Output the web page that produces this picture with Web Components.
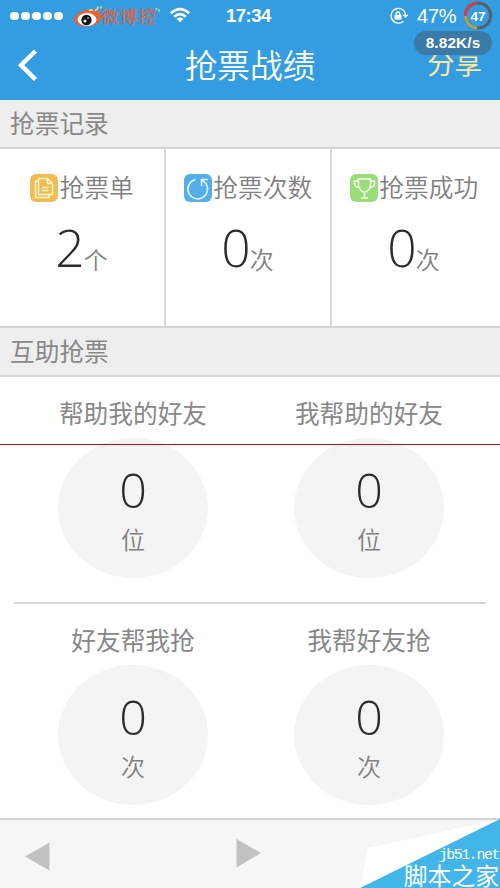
<!DOCTYPE html>
<html lang="zh-CN">
<head>
<meta charset="utf-8">
<title>抢票战绩</title>
<style>
body{margin:0;width:500px;height:888px;overflow:hidden;background:#fff;font-family:"Noto Sans CJK SC",sans-serif;color:#888}
</style>
</head>
<body>
<ticket-app></ticket-app>
<script>
const define=(name,html)=>customElements.define(name,class extends HTMLElement{
  constructor(){super();this.attachShadow({mode:'open'}).innerHTML=html;}
});

define('status-bar',`
<style>
:host{display:grid;grid-template-columns:73px 96px 57px 162px 112px;height:32px;align-items:center;color:#fff;font-family:"Liberation Sans",sans-serif}
.dots{display:flex;gap:2.1px;padding-left:10px}
.dots i{width:8.9px;height:8.9px;border-radius:50%;background:#fff}
svg{display:block}
.time{font:bold 18.500px/32px "Liberation Sans",sans-serif;letter-spacing:-.5px}
.right{display:flex;align-items:center}
.pct{font-size:20px;line-height:32px;width:46px;letter-spacing:-.2px;padding-left:1px}
</style>
<div class="dots"><i></i><i></i><i></i><i></i><i></i></div>
<svg width="96" height="32" viewBox="0 0 96 32">
  <path d="M1 20C2 13 12 8 22 10C28 11 31 17 26 22C20 28 3 29 1 20Z" fill="#e96036"/>
  <ellipse cx="14" cy="19.5" rx="9.5" ry="6.5" fill="#fff"/>
  <circle cx="13.5" cy="20" r="5.2" fill="#101317"/><circle cx="12" cy="21" r="1.5" fill="#fff"/><circle cx="15" cy="18" r=".8" fill="#fff"/>
  <path d="M16 11q2-2 4-.5m2 .5q1-2 3-2" stroke="#e8d98a" stroke-width="1.5" fill="none"/>
  <path d="M24.500 8.500l1-2m2 2l1-2M83 9.500l1-1.500m1.500 3.500l1-2" stroke="#d8e9a0" stroke-width="1.5"/>
  <text x="28" y="22.500" font-family="Noto Sans CJK SC,sans-serif" font-size="17.500" font-weight="500" fill="#d0694f" textLength="55">微博控</text>
</svg>
<svg width="57" height="32" viewBox="0 0 57 32" fill="none" stroke="#fff" stroke-width="2.5">
  <path d="M1.8 13.3Q11 5 20.200 13.300M5.200 16.700Q11 11.600 16.800 16.700"/><path d="M7.500 18.700Q11 16.200 14.500 18.700L11 22.300Z" fill="#fff" stroke="none"/>
</svg>
<span class="time">17:34</span>
<div class="right">
<svg width="28" height="32" viewBox="0 0 28 32" fill="none" stroke="#fff" stroke-width="1.400"><path d="M15.500 21.200A7.400 7.400 0 1 1 15.900 10.700Q17.500 12.500 17.500 15"/><path d="M14.500 14.800H20.500L17.500 18Z" fill="#fff" stroke="none"/><rect x="6.500" y="14.800" width="7" height="4.800" fill="#fff" stroke="none"/><path d="M8.200 15v-1.200a1.800 1.800 0 0 1 3.600 0V15" stroke-width="1.300"/></svg>
<span class="pct">47%</span>
<svg width="32" height="32" viewBox="0 0 32 32" fill="none" stroke-width="3"><circle cx="15" cy="15.500" r="12.600" stroke="#55606a"/><path d="M2.400 16A12.600 12.600 0 0 1 14 3" stroke="#db3d3c"/><path d="M14 28.100A12.600 12.600 0 0 1 2.400 16" stroke="#b5a14a"/><text x="15" y="20.500" text-anchor="middle" fill="#fff" font-family="Liberation Sans,sans-serif" font-weight="bold" font-size="13.500">47</text></svg>
</div>`);

define('nav-bar',`
<style>
:host{display:grid;grid-template-columns:100px 1fr 100px;height:68px;color:#fff;position:relative}
svg{display:block}
.title{font-size:32.700px;line-height:64px;font-weight:350;text-align:center}
.share{font-size:27.500px;line-height:24px;padding:18px 0 0 27px;color:#ffe69a}
.speed{position:absolute;left:414px;top:-1px;width:78px;height:24px;border-radius:12px;background:#3b79a6;font:bold 15.300px/24px "Liberation Sans",sans-serif;text-align:center;letter-spacing:.15px}
</style>
<svg width="100" height="68"><path d="M35.500 19L21 33.200L35.500 47.500" fill="none" stroke="#fff" stroke-width="4.500"/></svg>
<span class="title">抢票战绩</span><span class="share">分享</span><span class="speed">8.82K/s</span>`);

define('section-title',`
<style>:host{display:block;box-sizing:border-box;height:49px;background:#eee;border-bottom:2px solid #d4d4d4;padding-left:10px;font-size:24.700px;line-height:45px}</style><slot></slot>`);

define('stat-cell',`
<style>
:host{display:flex;flex-direction:column;align-items:center;box-sizing:border-box;height:177px;padding-top:20px;border-right:2px solid #d8d8d8}
:host(:last-child){border-right:0}
.head{display:flex;align-items:center;gap:1.500px;height:37px;font-size:24.700px;line-height:34px;font-weight:350;color:#808080}
.label{position:relative;top:-1.500px}
.val{display:flex;align-items:baseline;height:70px;line-height:70px;margin-top:6px}
.num{font-family:"Open Sans",sans-serif;font-weight:360;font-size:51.500px;color:#2c2c2c;letter-spacing:-1px;margin-left:-1px}
.unit{position:relative;top:2px;font-size:24px;font-weight:350;color:#808080}
::slotted(svg){display:block}
</style>
<div class="head"><slot name="icon"></slot><span class="label"><slot name="label"></slot></span></div>
<div class="val"><span class="num"><slot name="num"></slot></span><span class="unit"><slot name="unit"></slot></span></div>`);

define('help-stat',`
<style>
:host{display:flex;flex-direction:column;align-items:center;width:150px;padding-top:17px}
.label{font-size:24.700px;line-height:36px;height:44px;white-space:nowrap}
.disc{width:150px;height:140px;border-radius:50%;background:#f4f4f4;display:flex;flex-direction:column;align-items:center;box-sizing:border-box;padding-top:17px}
.num{font:360 48.500px/68px "Open Sans",sans-serif;color:#2c2c2c}
.unit{font-size:24px;font-weight:350;line-height:31px;color:#808080}
</style>
<span class="label"><slot name="label"></slot></span>
<div class="disc"><span class="num"><slot name="num"></slot></span><span class="unit"><slot></slot></span></div>`);

define('page-footer',`
<style>
:host{display:block;position:relative;box-sizing:border-box;height:70px;background:#f6f6f6;border-top:2px solid #d4d4d4}
svg{display:block}
.mark{position:absolute;right:0;bottom:0;width:140px;height:69px;color:#fff}
.mark p{position:absolute;margin:0;right:1px;white-space:nowrap}
.url{top:29px;font:14.800px/15px "Liberation Mono",monospace;letter-spacing:-1.350px}
.name{bottom:3px;font-size:23.800px;line-height:20px}
</style>
<svg width="500" height="68" fill="#c2c2c2"><path d="M25 36.500L49.500 22.500V50.500ZM236.500 19V47.500L261 33Z"/></svg>
<div class="mark"><svg width="140" height="69"><path d="M8 29L140 0V8L0 69Z" fill="#fff"/><path d="M140 0V69H0Z" fill="#42b6e9"/></svg><p class="url">jb51.net</p><p class="name">脚本之家</p></div>`);

define('ticket-app',`
<style>
:host{display:block;position:relative;width:500px;height:888px}
header{height:100px;background:#349de2}
.cells{display:grid;grid-template-columns:166px 166px 164px;height:177px;border-bottom:2px solid #d4d4d4}
.help{display:flex;justify-content:space-between;padding:0 56px 0 58px;height:225px;box-sizing:border-box}
.second{height:214px}
hr{margin:0 14px;border:0;height:2px;background:#d8d8d8}
.line{position:absolute;left:0;top:444px;width:500px;height:1px;background:#b01c1c;box-shadow:0 0 1px #ffb8b8}
.body{height:441px}
</style>
<header><status-bar></status-bar><nav-bar></nav-bar></header>
<section-title>抢票记录</section-title>
<div class="cells">
<stat-cell><svg slot="icon" width="28" height="28"><rect width="28" height="28" rx="6" fill="#eebd55"/><g fill="none" stroke="#fff4ca" stroke-width="1.500" stroke-linejoin="round"><path d="M8.500 4.500H17.500L22.500 9.500V20.500H8.500ZM17.500 4.500V9.500H22.500M8 7H5.500V23.500H19V21M12 13.500H18.500M12 16.500H18.500"/></g></svg><span slot="label">抢票单</span><span slot="num">2</span><span slot="unit">个</span></stat-cell>
<stat-cell><svg slot="icon" width="28" height="28"><rect width="28" height="28" rx="6" fill="#55aeec"/><g fill="none" stroke="#e5f7ff" stroke-width="1.600"><path d="M11.500 5.500A9.800 9.800 0 1 0 20.500 8L17.500 5.500M17.500 12V5.500H24"/></g></svg><span slot="label">抢票次数</span><span slot="num">0</span><span slot="unit">次</span></stat-cell>
<stat-cell><svg slot="icon" width="28" height="28"><rect width="28" height="28" rx="6" fill="#9bdc7b"/><g fill="none" stroke="#f5ffe9" stroke-width="1.500"><path d="M8.500 5H20.500V11Q20 16.500 14.500 18.500Q9 16.500 8.500 11ZM8.500 7H4.500V10Q5 13 9 13.500M20.500 7H24.500V10Q24 13 20 13.500M14.500 18.500V24M11 24H18"/></g></svg><span slot="label">抢票成功</span><span slot="num">0</span><span slot="unit">次</span></stat-cell>
</div>
<section-title>互助抢票</section-title>
<div class="body">
<div class="help"><help-stat><span slot="label">帮助我的好友</span><span slot="num">0</span>位</help-stat><help-stat><span slot="label">我帮助的好友</span><span slot="num">0</span>位</help-stat></div>
<hr>
<div class="help second"><help-stat><span slot="label">好友帮我抢</span><span slot="num">0</span>次</help-stat><help-stat><span slot="label">我帮好友抢</span><span slot="num">0</span>次</help-stat></div>
</div>
<page-footer></page-footer>
<div class="line"></div>`);
</script>
</body>
</html>
